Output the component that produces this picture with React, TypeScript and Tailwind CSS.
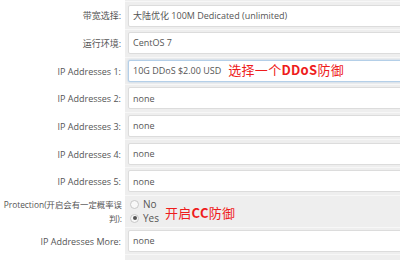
import React from "react";

const font = { fontFamily: '"Open Sans", "Noto Sans CJK SC", sans-serif' };

type Row = { label: string; value: string; focus?: boolean };

const rows: Row[] = [
  { label: "带宽选择:", value: "大陆优化 100M Dedicated (unlimited)" },
  { label: "运行环境:", value: "CentOS 7" },
  { label: "IP Addresses 1:", value: "10G DDoS $2.00 USD", focus: true },
  { label: "IP Addresses 2:", value: "none" },
  { label: "IP Addresses 3:", value: "none" },
  { label: "IP Addresses 4:", value: "none" },
  { label: "IP Addresses 5:", value: "none" },
];

function Field({ value, focus, children }: { value: string; focus?: boolean; children?: React.ReactNode }) {
  return (
    <div
      className={
        "h-[22px] w-[300px] shrink-0 rounded-[2px] bg-white flex items-center pl-[4px] text-[9px] text-[#555] whitespace-nowrap border " +
        (focus ? "border-[#b4cfe8] shadow-[0_0_2px_rgba(102,160,220,0.5)]" : "border-[#dcdcdc]")
      }
    >
      <span>{value}</span>
      {children}
    </div>
  );
}

function Note({ children }: { children: React.ReactNode }) {
  return (
    <span
      className="text-[13px] text-[#ee1c1c] tracking-[0.3px] leading-none"
      style={{ fontFamily: '"Noto Sans CJK SC", "Liberation Serif", serif' }}
    >
      {children}
    </span>
  );
}

function Radio({ checked, label }: { checked?: boolean; label: string }) {
  return (
    <div className="flex items-center gap-[4px] h-[14px]">
      <span className="w-[9px] h-[9px] rounded-full border border-[#c8c8c8] bg-[#f8f8f8] flex items-center justify-center">
        {checked && <span className="w-[4px] h-[4px] rounded-full bg-[#555]" />}
      </span>
      <span className="text-[10px] text-[#555]">{label}</span>
    </div>
  );
}

export default function App() {
  return (
    <div className="w-[400px] h-[260px] overflow-hidden bg-white" style={font}>
      <div className="flex h-[2.2px]">
        <div className="w-[125px] bg-white" />
        <div className="flex-1 bg-[#eeeeee] border-b border-[#f7f7f7]" />
      </div>
      {rows.map((r) => (
        <div key={r.label} className="flex h-[27.67px]">
          <div className="w-[125px] shrink-0 bg-white flex items-center justify-end pr-[4px] text-[9px] text-[#555] whitespace-nowrap">
            {r.label}
          </div>
          <div className="flex-1 bg-[#eeeeee] border-b border-[#f7f7f7] flex items-center pl-[3px]">
            <Field value={r.value} focus={r.focus}>
              {r.focus && (
                <span className="ml-[7px]">
                  <Note>
                    选择一个<b className="font-bold">DDoS</b>防御
                  </Note>
                </span>
              )}
            </Field>
          </div>
        </div>
      ))}
      <div className="flex h-[32px]">
        <div className="w-[125px] shrink-0 bg-white flex flex-col justify-center items-end pr-[3px] text-[8.4px] text-[#555] whitespace-nowrap leading-[14px]">
          <span>Protection(开启会有一定概率误</span>
          <span>判):</span>
        </div>
        <div className="flex-1 bg-[#eeeeee] border-b border-[#f7f7f7] flex items-center pl-[5px]">
          <div className="flex flex-col">
            <Radio label="No" />
            <Radio label="Yes" checked />
          </div>
          <span className="ml-[6px] mt-[2px]">
            <Note>
              开启<b className="font-bold">CC</b>防御
            </Note>
          </span>
        </div>
      </div>
      <div className="flex h-[27.67px]">
        <div className="w-[125px] shrink-0 bg-white flex items-center justify-end pr-[4px] text-[9px] text-[#555] whitespace-nowrap">
          IP Addresses More:
        </div>
        <div className="flex-1 bg-[#eeeeee] border-b border-[#f7f7f7] flex items-center pl-[3px]">
          <Field value="none" />
        </div>
      </div>
      <div className="flex h-[10px]">
        <div className="w-[125px] bg-white" />
        <div className="flex-1 bg-[#eeeeee]" />
      </div>
    </div>
  );
}
